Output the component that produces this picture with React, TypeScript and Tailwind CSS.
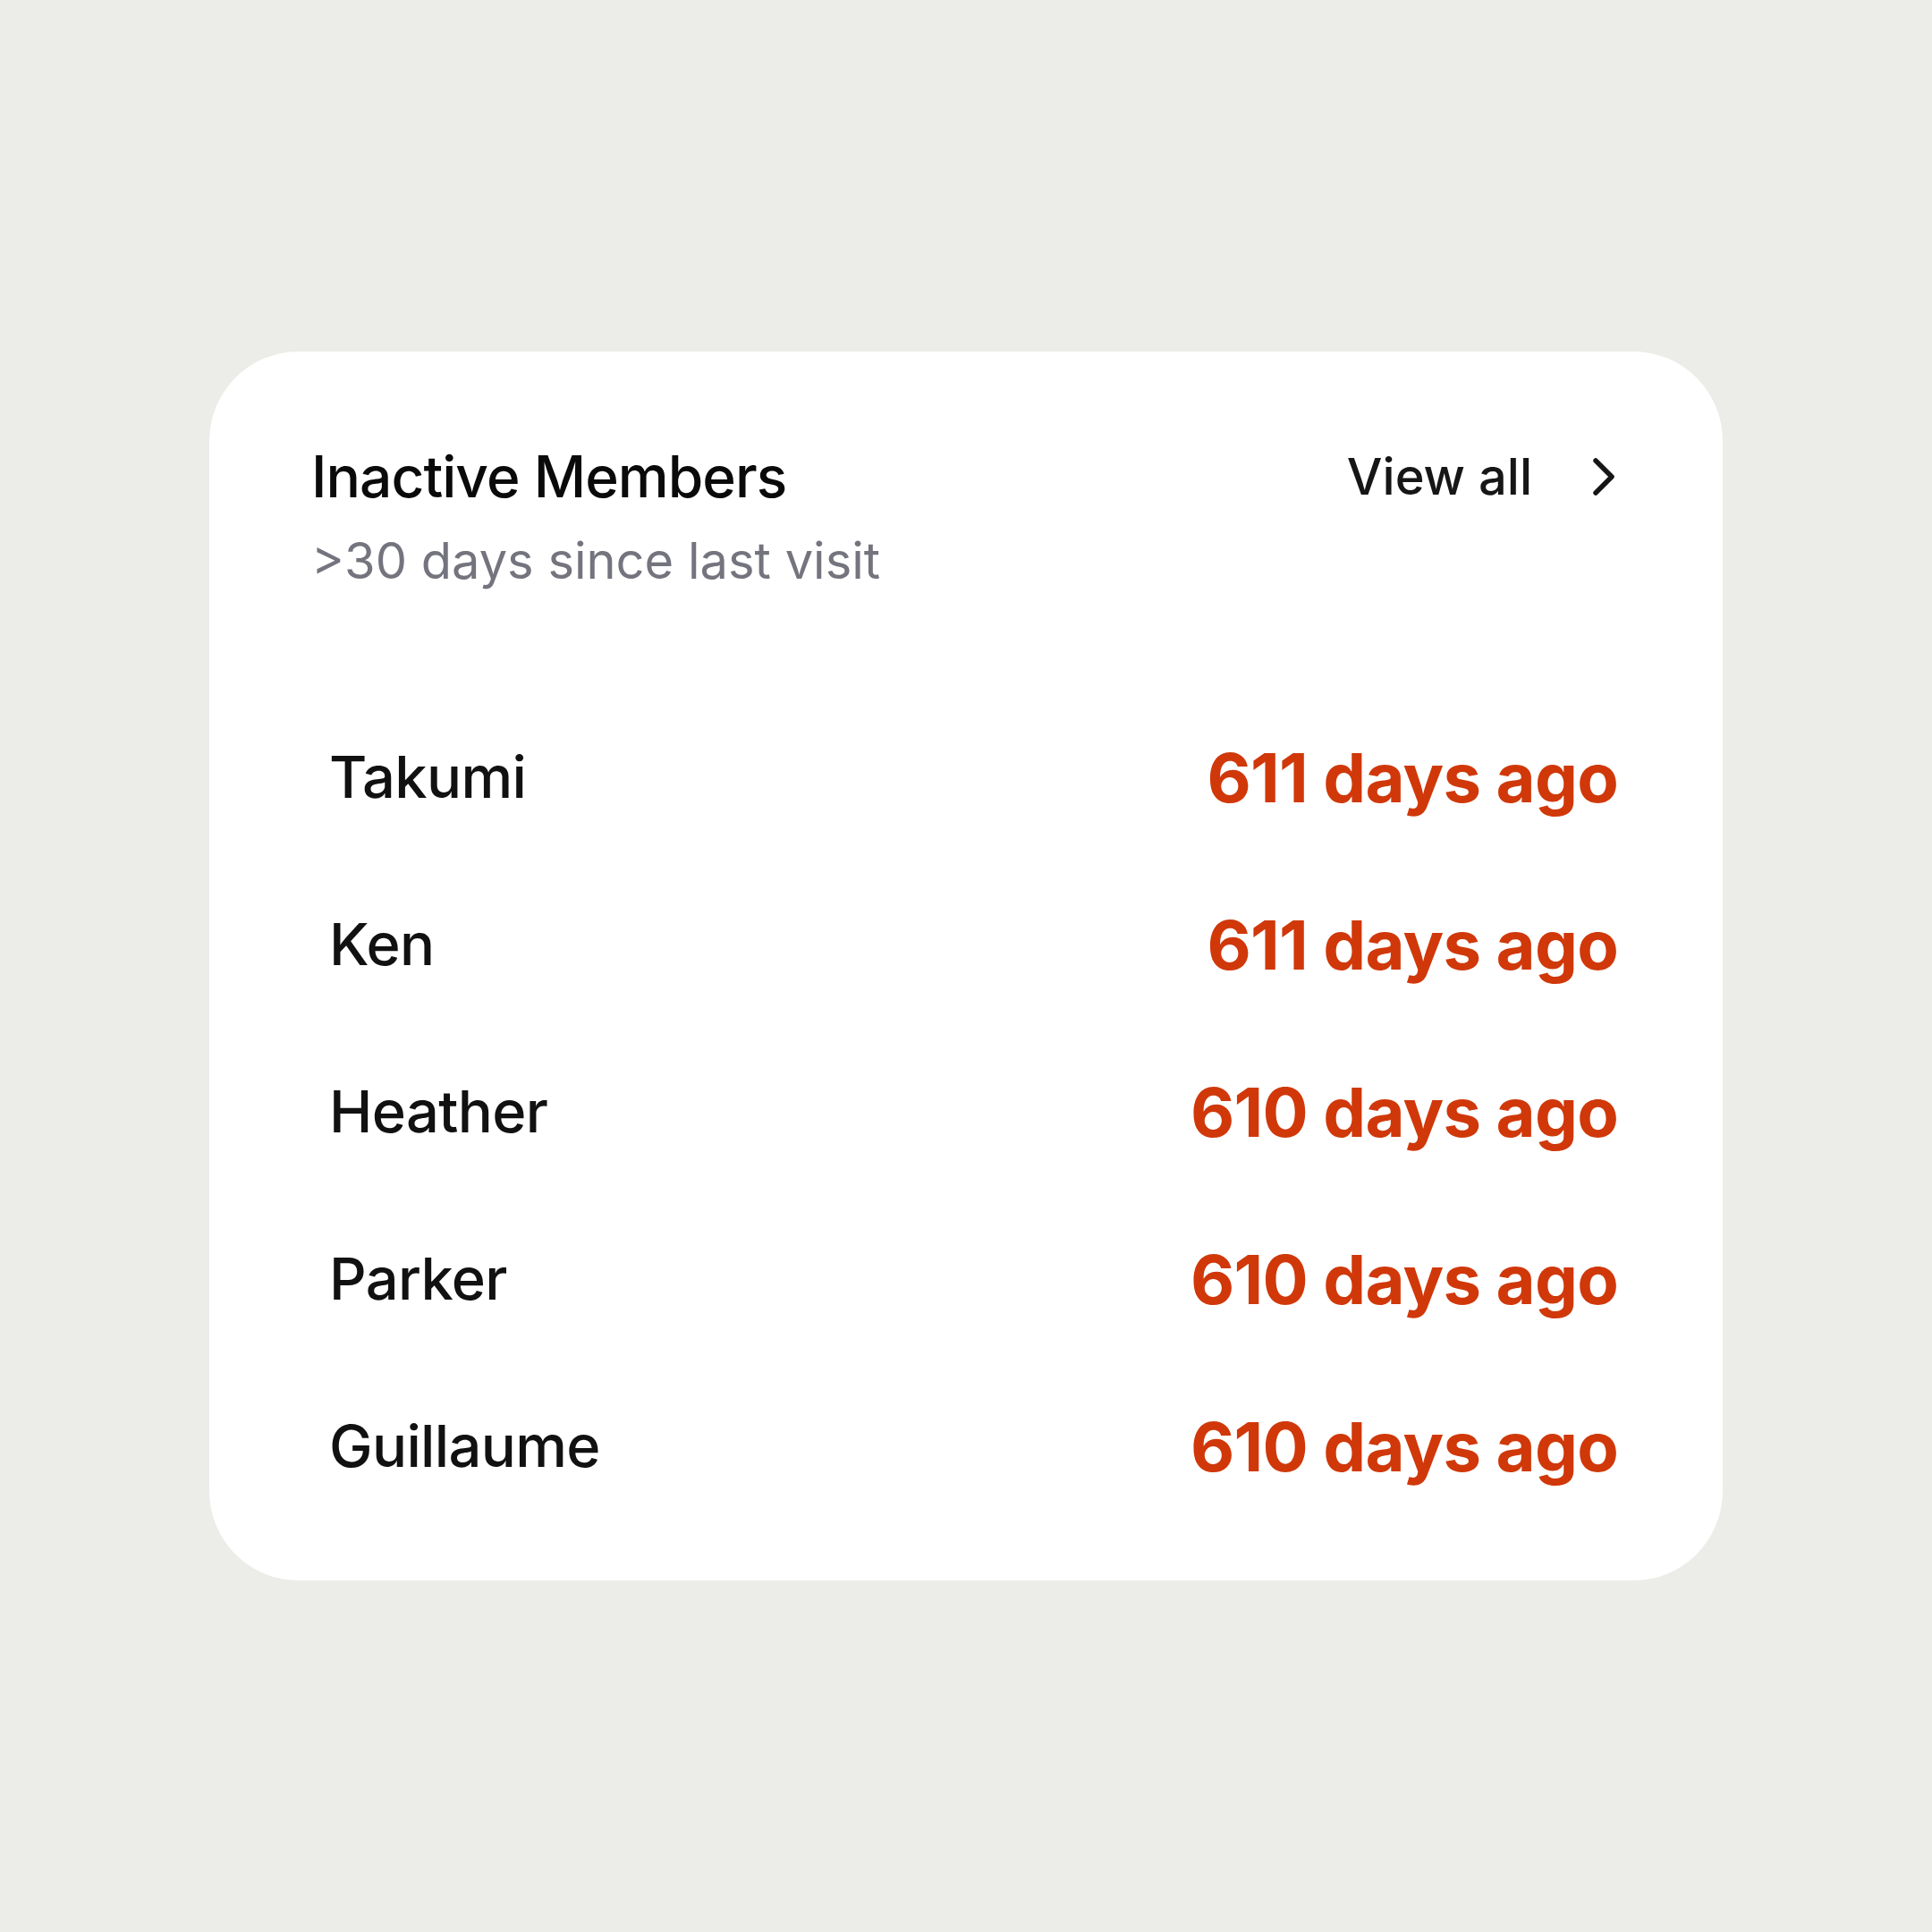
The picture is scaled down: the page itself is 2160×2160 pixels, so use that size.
type Member = { name: string; days: number };

const MEMBERS: Member[] = [
  { name: 'Takumi', days: 611 },
  { name: 'Ken', days: 611 },
  { name: 'Heather', days: 610 },
  { name: 'Parker', days: 610 },
  { name: 'Guillaume', days: 610 },
];

function Chevron() {
  return (
    <svg viewBox="0 0 30 44" className="h-[44px] w-[30px]" aria-hidden>
      <path d="M5 4 L23 22 L5 40" fill="none" stroke="currentColor" strokeWidth={5.5} strokeLinecap="round" strokeLinejoin="round" />
    </svg>
  );
}

function MemberRow({ name, days }: Member) {
  return (
    <li className="flex h-[187px] items-center justify-between pl-[17px]">
      <span className="text-[65px] font-medium leading-none tracking-[-0.01em] text-[#111111]">{name}</span>
      <span className="text-[76px] font-bold leading-none tracking-[-0.01em] text-[#d0380a]">
        {days} days ago
      </span>
    </li>
  );
}

export default function App() {
  return (
    <div
      className="flex min-h-screen w-full justify-center bg-[#ecece8] pt-[393px]"
      style={{ fontFamily: 'Inter, "Noto Sans", sans-serif' }}
    >
      <div className="h-[1374px] w-[1692px] rounded-[100px] bg-white px-[117px]">
        {/* ── Header ─────────────────────────── */}
        <div className="pt-[108px]">
          <div className="flex items-center justify-between">
            <h2 className="-ml-[3px] text-[64px] font-medium leading-none tracking-[-0.015em] text-[#0a0a0a]">
              Inactive Members
            </h2>
            <button type="button" className="flex items-center gap-[66px] text-[#161616]">
              <span className="text-[56px] font-medium leading-none">View all</span>
              <Chevron />
            </button>
          </div>
          <p className="-ml-[3px] mt-[34px] text-[56px] leading-none text-[#74747e]">&gt;30 days since last visit</p>
        </div>

        {/* ── Rows ───────────────────────────── */}
        <ul className="mt-[120px]">
          {MEMBERS.map((m) => (
            <MemberRow key={m.name} {...m} />
          ))}
        </ul>
      </div>
    </div>
  );
}
